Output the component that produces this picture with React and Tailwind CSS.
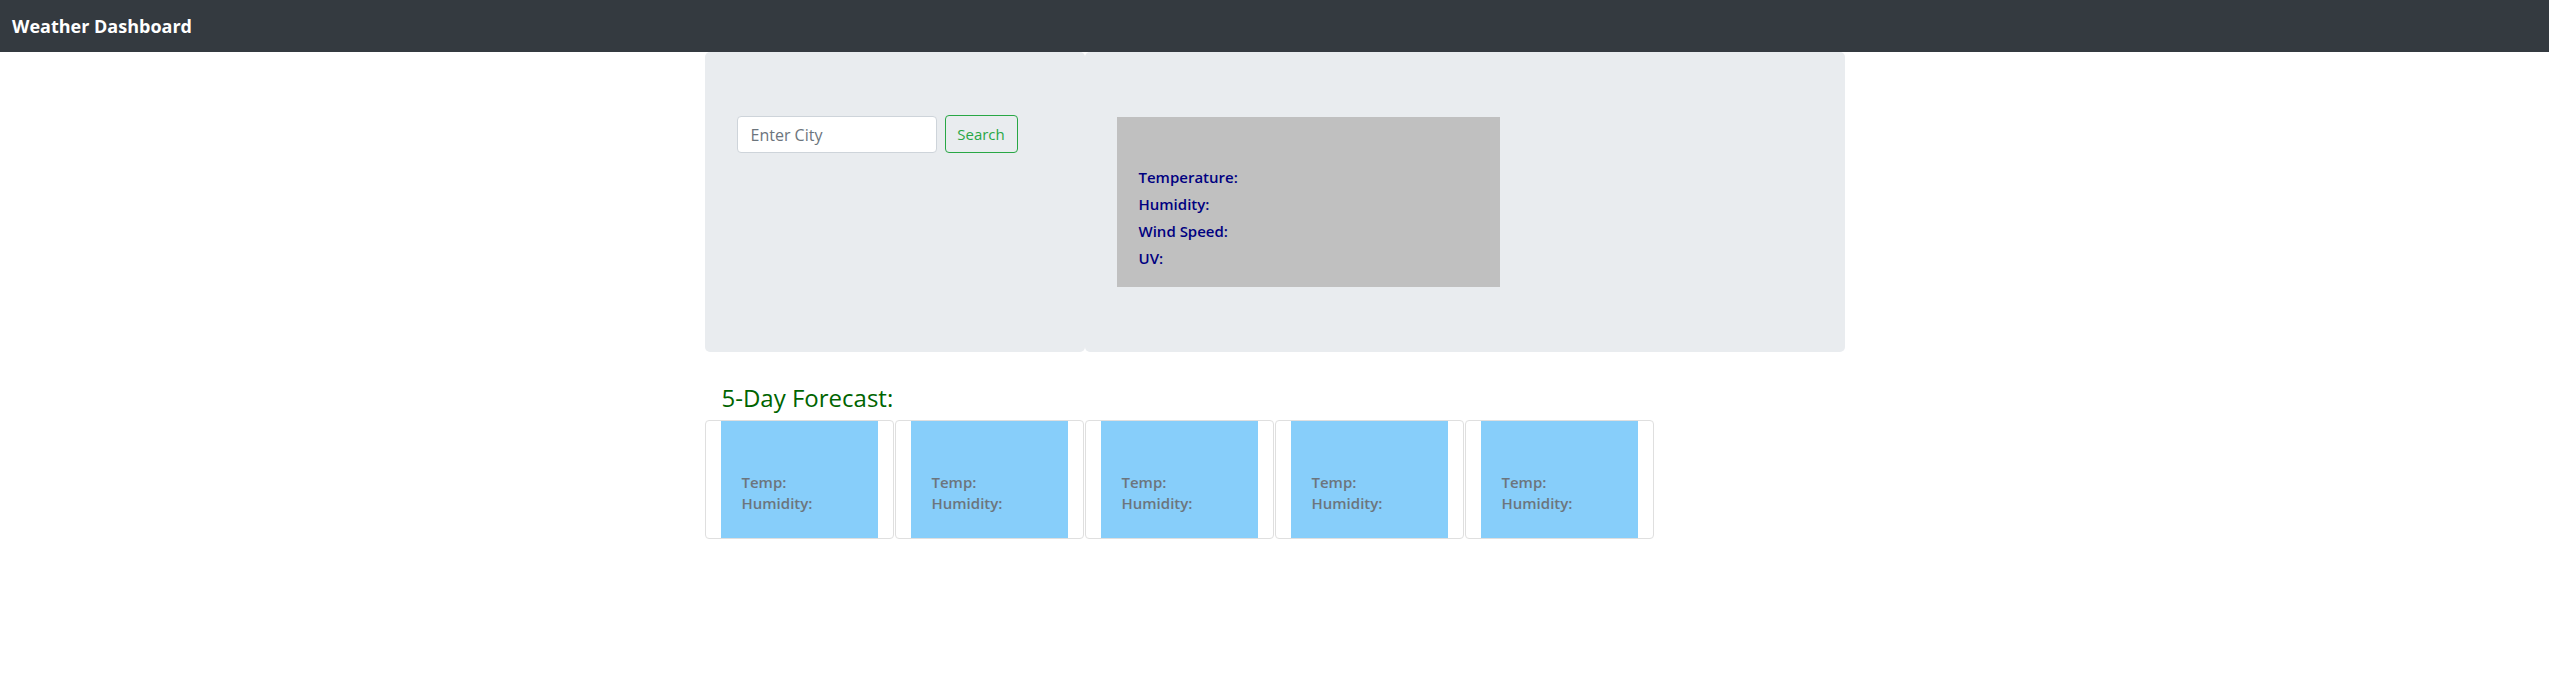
const days = [1, 2, 3, 4, 5]

function ForecastCard() {
  return (
    <div className="w-[189px] h-[119px] border border-[#dfdfdf] rounded-[4px] px-[15px] bg-white">
      <div className="h-full bg-[#87cefa] pl-[21px] pt-[51px] text-[15px] leading-[21px] font-semibold text-[#6c757d]">
        <div>Temp:</div>
        <div>Humidity:</div>
      </div>
    </div>
  )
}

function App() {
  return (
    <div className="min-h-screen bg-white text-[#212529] font-['Open_Sans',sans-serif]">
      <header className="h-[52px] bg-[#343a40] flex items-center px-3">
        <h1 className="text-white text-[18px] font-bold">Weather Dashboard</h1>
      </header>

      <main className="w-[1140px] mx-auto">
        <div className="flex h-[300px]">
          <div className="w-[380px] bg-[#e9ecef] rounded-[5px] px-8 pt-16">
            <div className="flex gap-2">
              <input
                type="text"
                placeholder="Enter City"
                className="w-[200px] h-[37px] bg-white border border-[#ced4da] rounded-[4px] px-[13px] text-[16px] placeholder:text-[#6c757d] outline-none"
              />
              <button className="w-[73px] h-[38px] -mt-px border border-[#28a745] rounded-[4px] text-[#28a745] text-[15px]">
                Search
              </button>
            </div>
          </div>
          <div className="w-[760px] bg-[#e9ecef] rounded-[5px] pl-8 pt-[65px]">
            <div className="w-[383px] h-[170px] bg-[#c0c0c0] pl-[22px] pt-[47px] text-[15px] leading-[27px] font-semibold text-[#000080]">
              <div>Temperature:</div>
              <div>Humidity:</div>
              <div>Wind Speed:</div>
              <div>UV:</div>
            </div>
          </div>
        </div>

        <h2 className="mt-[31px] pl-[17px] text-[24px] leading-[29px] font-medium text-[#006400]">
          5-Day Forecast:
        </h2>
        <div className="flex gap-px mt-[8px]">
          {days.map((d) => (
            <ForecastCard key={d} />
          ))}
        </div>
      </main>
    </div>
  )
}

export default App
